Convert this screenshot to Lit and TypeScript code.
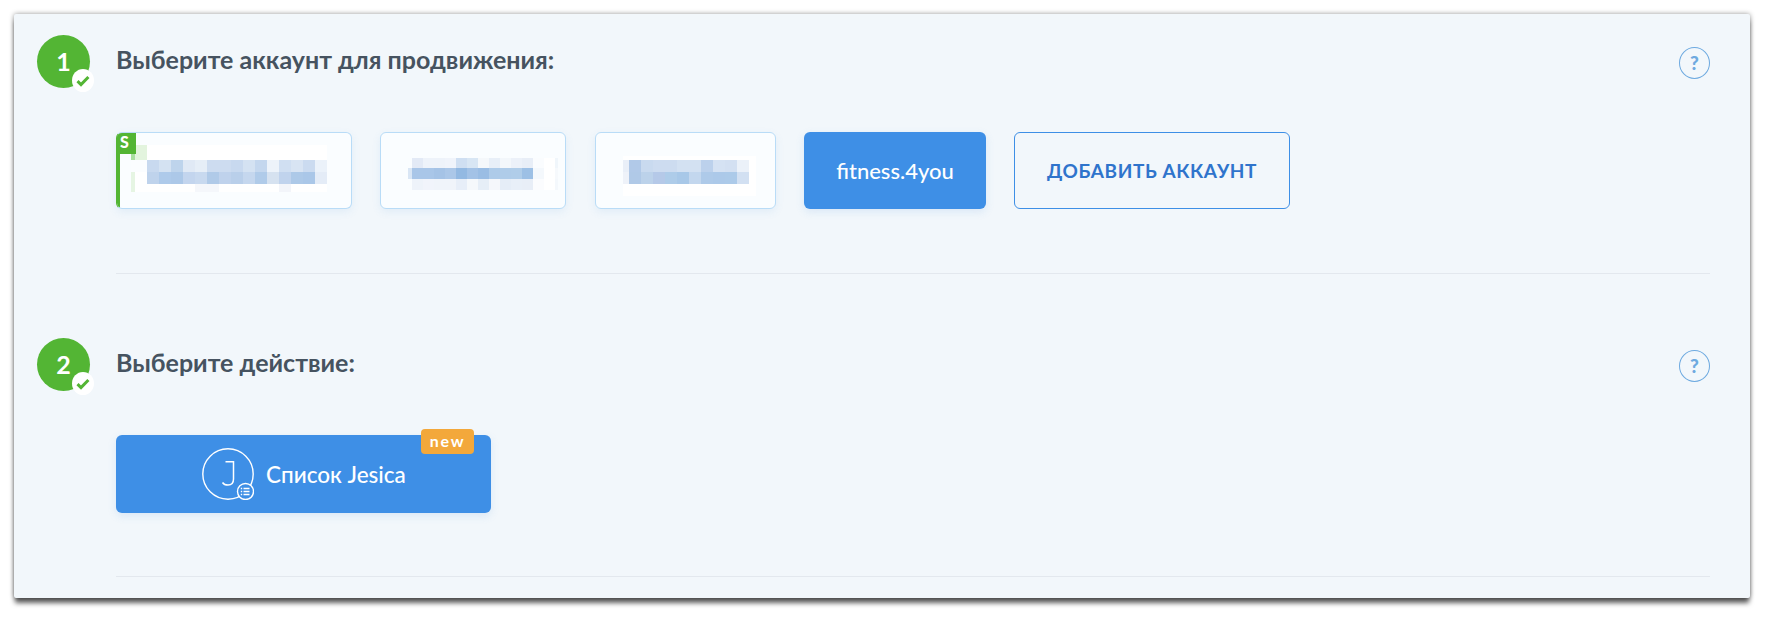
import { LitElement, html, css } from "lit";
import { customElement, property } from "lit/decorators.js";

type Grid = { cols: string; rows: string; cells: string[][] };

const W = "#ffffff";
const card1: Grid = {
  cols: "4px 12px repeat(15, 12px)",
  rows: "15px 12px 12px 8px",
  cells: [
    ["#a9dfa0", "#e3f4de", W, W, W, W, W, W, W, W, W, W, W, W, W, W, W],
    ["#fbfdff", "#fbfdff", "#c8d9ef", "#d4e2f2", "#bed4ec", "#e0e9f5", "#e6eef7", "#cddcf0", "#cddcf0", "#c8d9ef", "#d4e2f2", "#c4d7ee", "#edf3fa", "#d0dff2", "#d8e4f3", "#cbdbf0", "#ebf2fa"],
    ["#e6f5e3", W, "#bfd3ec", "#aecaea", "#acc8e8", "#c3d5ee", "#c8d9ef", "#b0cae8", "#bfd2ec", "#b9cfea", "#c5d7ee", "#b0cbe9", "#d6e2f0", "#c0d3ed", "#adc9e8", "#aac7e8", "#e4ecf7"],
    ["#e6f5e3", W, W, W, W, W, "#f5f7fb", "#f5f7fb", W, W, W, W, W, "#f3f5fa", W, W, W],
  ],
};
const card2: Grid = {
  cols: "4px repeat(13, 11px) 3px",
  rows: "10px 11px 11px",
  cells: [
    ["#fafdff", "#e3eaf6", "#eef3fa", "#eef3fa", "#f0f4fb", "#cfdff2", "#d8e6f4", "#f5f8fb", "#e8eff8", "#f3f7fb", "#ecf1f9", "#e8eef7", "#fafcfe", W, "#f0f6fb"],
    ["#d9e6f5", "#a9c6e8", "#a9c6e8", "#a5c3e6", "#abc7e8", "#93b9e2", "#a3c2e6", "#9abde4", "#aecbe9", "#afcce9", "#b0cde9", "#9dc0e5", "#f4f8fc", W, "#f6f9fc"],
    ["#fafdff", "#eef3fa", "#f1f4fb", "#f0f4fa", "#f0f4fa", "#e7eef8", "#f5f8fb", "#e6eef7", "#f5f7fb", "#e5edf7", "#e8eff8", "#e8eef7", "#fbfcfe", W, "#f4f8fc"],
  ],
};
const card3: Grid = {
  cols: "6px repeat(10, 12px) 7px",
  rows: "4px 12px 12px 12px",
  cells: [
    [W, W, W, W, W, W, W, W, W, W, W, W],
    ["#e9eff8", "#b1c9e8", "#c9daef", "#cddcf0", "#cddcf0", "#d3e1f2", "#d3e1f2", "#bcd1ec", "#d5e2f3", "#d3e0f2", "#ebf1f9", W],
    ["#eef2f9", "#b0c9e7", "#bcd2ea", "#b5c9e8", "#aecce9", "#a8c8e8", "#c3d7ee", "#aecae9", "#acc9e9", "#accae9", "#d2e0f2", W],
    [W, W, W, W, W, W, W, W, W, W, W, W],
  ],
};

@customElement("pixel-block")
class PixelBlock extends LitElement {
  @property({ attribute: false }) grid!: Grid;
  static styles = css`
    :host { display: block; }
    .g { display: grid; }
  `;
  render() {
    const g = this.grid;
    return html`<div class="g" style="grid-template-columns:${g.cols};grid-template-rows:${g.rows}">
      ${g.cells.flat().map((c) => html`<div style="background:${c}"></div>`)}
    </div>`;
  }
}

@customElement("app-root")
class AppRoot extends LitElement {
  static styles = css`
    :host { display: block; font-family: Lato, "Open Sans", sans-serif; background: #fff; height: 624px; overflow: hidden; padding: 14px 20px 0 14px; box-sizing: border-box; }
    .panel { background: #f2f7fb; height: 584px; box-shadow: 0 6px 5px -1px rgba(0,0,0,.62), 0 0 5px rgba(0,0,0,.42); padding: 21px 40px 0 23px; box-sizing: border-box; border-radius: 2px; }
    .step { display: grid; grid-template-columns: 53px 1fr 31px; column-gap: 26px; }
    .step1 { height: 239px; }
    .step2 { height: 238px; margin-top: 64px; }
    .num { position: relative; width: 53px; height: 53px; border-radius: 50%; background: #53b534; color: #fff; font: 700 25px/52px Lato, sans-serif; text-align: center; }
    .ok { position: absolute; left: 35px; top: 34px; width: 22px; height: 23px; border-radius: 50%; background: #fff; display: flex; align-items: center; justify-content: center; }
    .title { margin: 0; font: 700 25px/30px Lato, sans-serif; color: #465360; padding-top: 9px; }
    .help { width: 31px; height: 32px; box-sizing: border-box; border: 1.5px solid #6eaae0; border-radius: 50%; color: #6eaae0; font: 900 19px/29px Lato, sans-serif; text-align: center; margin-top: 12px; }
    .body { grid-column: 2 / 4; }
    .row { display: flex; margin-top: 44px; height: 77px; }
    .card { position: relative; box-sizing: border-box; height: 77px; background: #fafdff; border: 1px solid #b9dcf7; border-radius: 6px; box-shadow: 0 3px 8px rgba(80,150,220,.1); display: flex; align-items: flex-start; overflow: hidden; }
    .c1 { width: 236px; margin-right: 28px; padding: 12px 0 0 14px; border-left-color: #53b534; }
    .c2 { width: 186px; margin-right: 29px; padding: 25px 0 0 27px; }
    .c3 { width: 181px; margin-right: 28px; padding: 23px 0 0 27px; }
    .stripe { position: absolute; left: 0; top: 0; bottom: 0; width: 3px; background: #53b534; }
    .badge { position: absolute; left: 0; top: 0; width: 19px; height: 21px; background: #53b534; color: #fff; font: 900 16px/18px Lato, sans-serif; padding-left: 3px; box-sizing: border-box; }
    .active { width: 182px; margin-right: 28px; height: 77px; background: #3e8fe6; border-radius: 6px; color: #fff; font: 500 22px/77px Lato, sans-serif; text-align: center; box-shadow: 0 3px 8px rgba(80,150,220,.15); }
    .add { width: 276px; height: 77px; box-sizing: border-box; border: 1px solid #3e8fe6; border-radius: 6px; color: #2f74cc; font: 700 19px/75px Lato, sans-serif; letter-spacing: .6px; text-align: center; }
    .rule { height: 1px; background: #e3e8ee; margin-top: 64px; }
    .step2 .rule { margin-top: 63px; }
    .action { position: relative; margin-top: 44px; width: 375px; height: 78px; background: #3e8fe6; border-radius: 6px; color: #fff; display: flex; align-items: center; padding-left: 86px; box-sizing: border-box; box-shadow: 0 3px 8px rgba(80,150,220,.15); font: 500 22.5px/1 Lato, sans-serif; gap: 12px; }
    .label { padding-top: 2px; }
    .new { position: absolute; left: 305px; top: -6px; width: 53px; height: 25px; background: #f3a83b; border-radius: 4px; color: #fff; font: 700 16px/24px Lato, sans-serif; letter-spacing: 1.8px; text-align: center; }
  `;

  ok() {
    return html`<span class="ok"><svg width="14" height="12" viewBox="0 0 14 12"><path d="M1.5 6.2 5 9.6 12.4 2" fill="none" stroke="#53b534" stroke-width="3"/></svg></span>`;
  }

  icon() {
    return html`<svg width="52" height="52" viewBox="0 0 52 52">
      <circle cx="26" cy="26" r="25.2" fill="none" stroke="#fff" stroke-width="1.4"/>
      <path d="M23.5 13.8H31.5V31c0 4-2.5 6-5.5 6-2.5 0-4.5-1-5.5-2.5" fill="none" stroke="#fff" stroke-width="1.5"/>
      <circle cx="43.5" cy="43.5" r="8" fill="#3e8fe6" stroke="#fff" stroke-width="1.4"/>
      <path d="M41.5 40.5h6M41.5 43.5h6M41.5 46.5h6M38.8 40.5h1.4M38.8 43.5h1.4M38.8 46.5h1.4" stroke="#fff" stroke-width="1.4"/>
    </svg>`;
  }

  render() {
    return html`<div class="panel">
      <section class="step step1">
        <div class="num">1${this.ok()}</div>
        <h2 class="title">Выберите аккаунт для продвижения:</h2>
        <div class="help">?</div>
        <div class="body">
          <div class="row">
            <div class="card c1"><pixel-block .grid=${card1}></pixel-block><span class="stripe"></span><span class="badge">S</span></div>
            <div class="card c2"><pixel-block .grid=${card2}></pixel-block></div>
            <div class="card c3"><pixel-block .grid=${card3}></pixel-block></div>
            <div class="active">fitness.4you</div>
            <div class="add">ДОБАВИТЬ АККАУНТ</div>
          </div>
          <div class="rule"></div>
        </div>
      </section>
      <section class="step step2">
        <div class="num">2${this.ok()}</div>
        <h2 class="title">Выберите действие:</h2>
        <div class="help">?</div>
        <div class="body">
          <div class="action">${this.icon()}<span class="label">Список Jesica</span><span class="new">new</span></div>
          <div class="rule"></div>
        </div>
      </section>
    </div>`;
  }
}
